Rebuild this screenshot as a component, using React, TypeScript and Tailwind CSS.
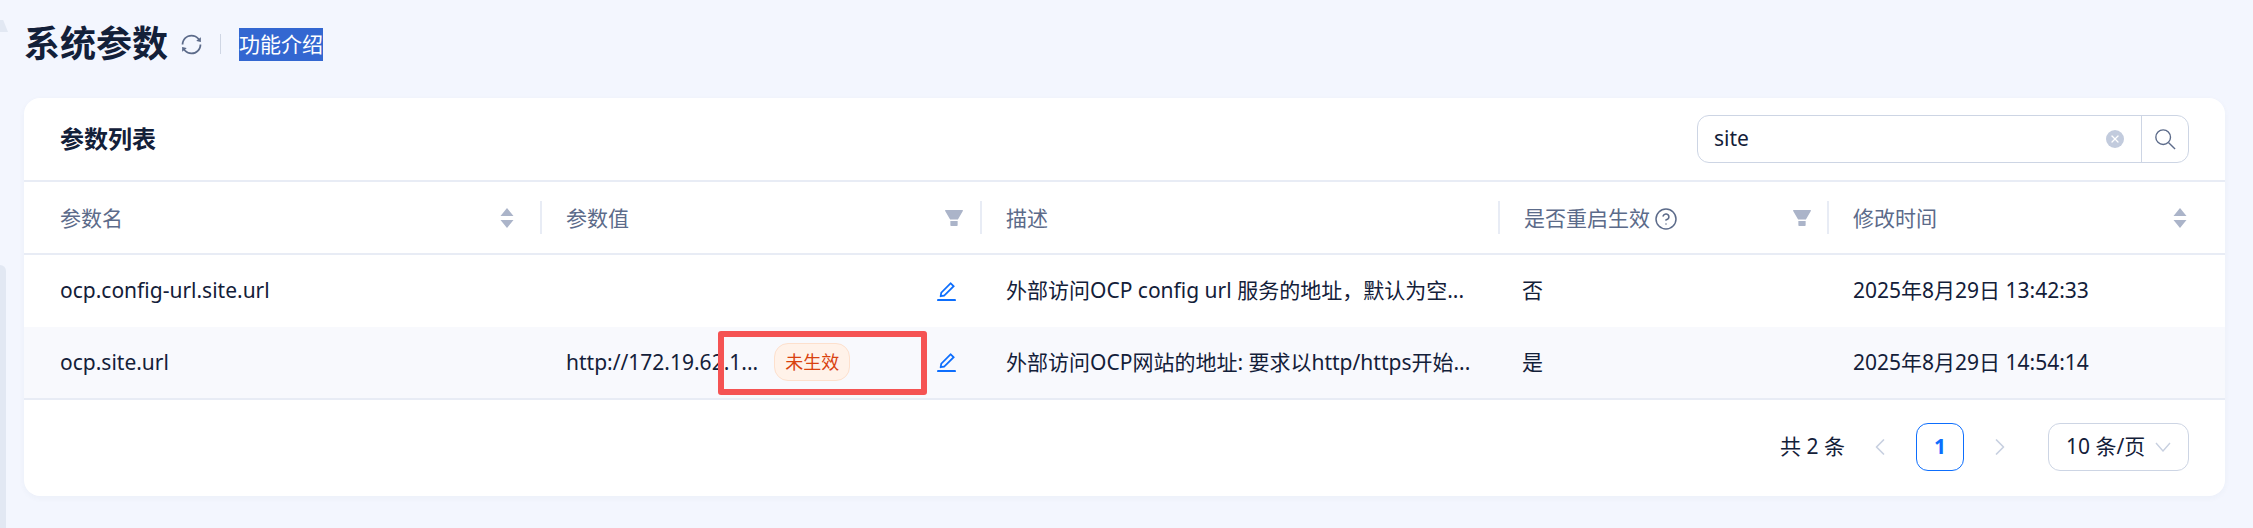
import { ChevronLeft, ChevronRight, CircleHelp, X } from 'lucide-react';

const font = { fontFamily: '"Noto Sans", "Noto Sans CJK SC", sans-serif' };

const cols = 'grid grid-cols-[516px_440px_518px_329px_398px]';

const EditIcon = () => (
  <svg viewBox="64 64 896 896" className="h-[21px] w-[21px] fill-[#0d6efd]">
    <path d="M257.7 752c2 0 4-.2 6-.5L431.9 722c2-.4 3.9-1.3 5.3-2.8l423.9-423.9a9.96 9.96 0 000-14.1L694.9 114.9c-1.9-1.9-4.4-2.9-7.1-2.9s-5.2 1-7.1 2.9L256.8 538.8c-1.5 1.5-2.4 3.3-2.8 5.3l-29.5 168.2a33.5 33.5 0 009.4 29.8c6.6 6.4 14.9 9.9 23.8 9.9zm67.4-174.4L687.8 215l73.3 73.3-362.7 362.6-88.9 15.7 15.6-89zM880 836H144c-17.7 0-32 14.3-32 32v36c0 4.4 3.6 8 8 8h784c4.4 0 8-3.6 8-8v-36c0-17.7-14.3-32-32-32z" />
  </svg>
);

const SyncIcon = () => (
  <svg viewBox="64 64 896 896" className="h-[21px] w-[21px] fill-[#5c6b8a]">
    <path d="M168 504.2c1-43.7 10-86.1 26.9-126 17.3-41 42.1-77.7 73.7-109.4S337 212.3 378 195c42.4-17.9 87.4-27 133.9-27s91.5 9.1 133.8 27A341.5 341.5 0 01755 268.8c9.9 9.9 19.2 20.4 27.8 31.4l-60.2 47a8 8 0 003 14.1l175.7 43c5 1.2 9.9-2.6 9.9-7.7l.8-180.9c0-6.7-7.7-10.5-12.9-6.3l-56.4 44.1C765.8 155.1 646.2 92 511.8 92 282.7 92 96.3 275.6 92 503.8a8 8 0 008 8.2h60c4.4 0 7.9-3.5 8-7.8zm756 7.8h-60c-4.4 0-7.9 3.5-8 7.8-1 43.7-10 86.1-26.9 126-17.3 41-42.1 77.8-73.7 109.4A342.45 342.45 0 01512.1 856a342.24 342.24 0 01-243.2-100.8c-9.9-9.9-19.2-20.4-27.8-31.4l60.2-47a8 8 0 00-3-14.1l-175.7-43c-5-1.2-9.9 2.6-9.9 7.7l-.7 181c0 6.7 7.7 10.5 12.9 6.3l56.4-44.1C258.2 868.9 377.8 932 512.2 932c229.2 0 415.5-183.7 419.8-411.8a8 8 0 00-8-8.2z" />
  </svg>
);

const FilterIcon = () => (
  <svg viewBox="64 64 896 896" className="h-5 w-5 fill-[#abb4c9]">
    <path d="M349 838c0 17.7 14.2 32 31.8 32h262.4c17.6 0 31.8-14.3 31.8-32V642H349v196zm531.1-684H143.9c-24.5 0-39.8 26.7-27.5 48l221.3 376h348.8l221.3-376c12.1-21.3-3.2-48-27.7-48z" />
  </svg>
);

const SortIcon = () => (
  <svg viewBox="0 0 14 22" className="h-[22px] w-[14px] fill-[#abb4c9]">
    <path d="M7 1l6.5 8H.5zM7 21L.5 13h13z" />
  </svg>
);

const SearchIcon = () => (
  <svg viewBox="0 0 24 24" className="h-[22px] w-[22px] fill-none stroke-[#5c6b8a] stroke-[1.5]">
    <circle cx="10" cy="10" r="8" />
    <path d="M16 16L23 23" />
  </svg>
);

const DownIcon = () => (
  <svg viewBox="0 0 16 10" className="h-[10px] w-4 fill-none stroke-[#c8d0e0] stroke-[1.4]">
    <path d="M1 1L8 9L15 1" />
  </svg>
);

const HeadCell = ({ children, divider = true, right }: { children: React.ReactNode; divider?: boolean; right?: React.ReactNode }) => (
  <div className="flex h-[33px] items-center justify-between">
    <div className={divider ? 'flex h-full flex-1 items-center justify-between border-l-2 border-[#e8ecf5] pl-6' : 'flex h-full flex-1 items-center justify-between pl-9'}>
      <div className="flex items-center gap-1 pt-0.5 text-[21px] text-[#5c6b8a]">{children}</div>
      {right}
    </div>
  </div>
);

export default function App() {
  return (
    <div style={font} className="relative min-h-[528px] bg-[#f3f6fe] pl-6 pr-7 text-[#132039]">
      {/* sliver of the collapsed side menu */}
      <div className="absolute bottom-0 left-0 top-[265px] w-1.5 rounded-tr-md bg-[#e2e8f3]" />
      <div className="absolute left-0 top-5 h-3 w-2 bg-[#e2e8f3] [clip-path:polygon(0_0,40%_0,100%_100%,0_100%)]" />

      {/* Page title */}
      <div className="flex h-[98px] items-center pb-2.5">
        <h1 className="text-[36px] font-bold leading-none">系统参数</h1>
        <span className="ml-[13px] flex"><SyncIcon /></span>
        <span className="mx-[18px] h-5 w-px bg-[#cfd6e4]" />
        <span className="bg-[#3367d1] py-px text-[21px] leading-[31px] text-white">功能介绍</span>
      </div>

      <div className="h-[398px] overflow-hidden rounded-2xl bg-white shadow-[0_2px_6px_rgba(54,69,99,0.04)]">
        {/* Card header */}
        <div className="flex h-[84px] items-center justify-between border-b-2 border-[#e8ecf5] pl-9 pr-[36px]">
          <h2 className="text-[24px] font-bold">参数列表</h2>
          <div className="flex h-12 w-[492px] rounded-xl border border-[#cdd5e4]">
            <div className="flex flex-1 items-center justify-between pl-4 pr-[17px]">
              <span className="text-[21px]">site</span>
              <span className="flex h-[18px] w-[18px] items-center justify-center rounded-full bg-[#c2cbdd]">
                <X className="h-3 w-3 text-white" strokeWidth={2.5} />
              </span>
            </div>
            <div className="flex w-[47px] items-center justify-center border-l border-[#cdd5e4]">
              <SearchIcon />
            </div>
          </div>
        </div>

        {/* Table header */}
        <div className={`${cols} h-[73px] items-center border-b-2 border-[#e8ecf5]`}>
          <div className="pr-[26px]"><HeadCell divider={false} right={<SortIcon />}>参数名</HeadCell></div>
          <div className="pr-[16px]"><HeadCell right={<FilterIcon />}>参数值</HeadCell></div>
          <HeadCell>描述</HeadCell>
          <div className="pr-[15px]"><HeadCell right={<FilterIcon />}>是否重启生效 <CircleHelp className="h-6 w-6" strokeWidth={1.5} /></HeadCell></div>
          <div className="pr-[38px]"><HeadCell right={<SortIcon />}>修改时间</HeadCell></div>
        </div>

        {/* Rows */}
        <div className={`${cols} h-[72px] items-center text-[21px]`}>
          <div className="pl-9">ocp.config-url.site.url</div>
          <div className="flex justify-end pr-[23px]"><EditIcon /></div>
          <div className="pl-[26px]">外部访问OCP config url 服务的地址，默认为空...</div>
          <div className="pl-6">否</div>
          <div className="pl-[26px]">2025年8月29日 13:42:33</div>
        </div>
        <div className={`${cols} h-[73px] items-center border-b-2 border-[#e8ecf5] bg-[#f8f9fd] text-[21px]`}>
          <div className="pl-9">ocp.site.url</div>
          <div className="relative flex items-center justify-between self-stretch pl-[26px] pr-[23px]">
            <div className="flex items-center gap-4">
              <span>http://172.19.62.1...</span>
              <span className="-mt-0.5 rounded-[14px] border border-[#fde0cd] bg-[#fff2e9] px-[10px] py-[3px] text-[18px] leading-[30px] text-[#d9420f]">未生效</span>
            </div>
            <EditIcon />
            {/* red annotation box */}
            <div className="absolute bottom-[3px] left-[178px] top-1 w-[209px] rounded-[3px] border-[6px] border-[#f55353]" />
          </div>
          <div className="pl-[26px]">外部访问OCP网站的地址: 要求以http/https开始...</div>
          <div className="pl-6">是</div>
          <div className="pl-[26px]">2025年8月29日 14:54:14</div>
        </div>

        {/* Pagination */}
        <div className="flex h-[96px] items-center justify-end pb-0.5 pr-9">
          <span className="text-[21px]">共 2 条</span>
          <ChevronLeft className="ml-[21px] h-7 w-7 text-[#c8d0e0]" strokeWidth={1.5} />
          <span className="ml-[22px] flex h-12 w-12 items-center justify-center rounded-xl border border-[#0d6efd] text-[21px] font-bold text-[#0d6efd]">1</span>
          <ChevronRight className="ml-[22px] h-7 w-7 text-[#c8d0e0]" strokeWidth={1.5} />
          <div className="ml-[34px] flex h-12 w-[141px] items-center justify-between rounded-xl border border-[#cdd5e4] pl-[17px] pr-[17px] text-[21px]">
            <span>10 条/页</span>
            <DownIcon />
          </div>
        </div>
      </div>
    </div>
  );
}
